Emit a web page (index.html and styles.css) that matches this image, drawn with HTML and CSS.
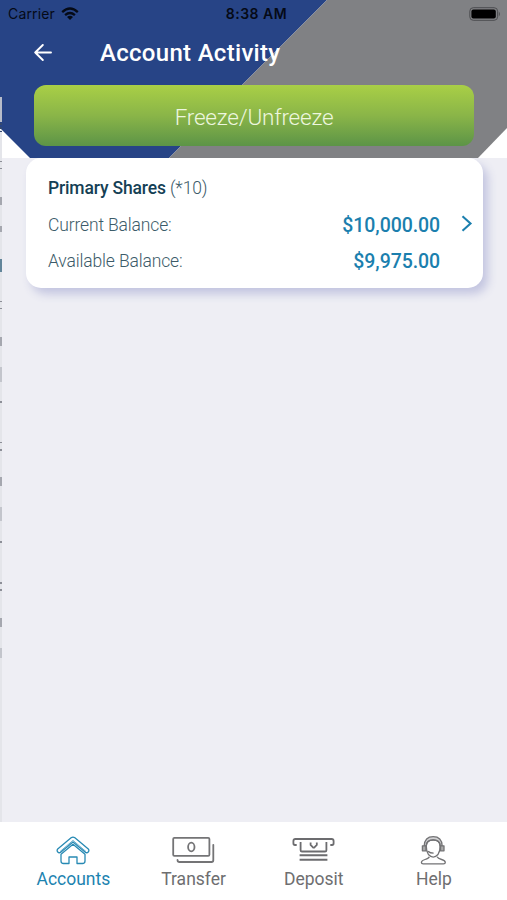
FILE: index.html
```html
<!DOCTYPE html>
<html lang="en">
<head>
<meta charset="utf-8">
<title>Account Activity</title>
<link rel="stylesheet" href="styles.css">
</head>
<body>
<div class="app">
  <header class="header">
    <svg class="header-bg" viewBox="0 0 507 158" aria-hidden="true">
      <path fill="#fff" d="M0 0h507v158H0z"/>
      <path fill="#274486" d="M0 0H327L169 158H30L0 128z"/>
      <path fill="#808184" d="M327 0H507V128L478 158H169z"/>
    </svg>
    <div class="status">
      <div class="carrier"><span class="carrier-name">Carrier</span>
        <svg width="18" height="14" viewBox="0 0 18 14" fill="none" stroke="#050a16" stroke-width="2.3"><path d="M1.2 5.1Q9 -2 16.8 5.1M4.1 8.1Q9 3.8 13.9 8.1"/><path fill="#050a16" stroke="none" d="M6 10Q9 7.6 12 10L9 13z"/></svg>
      </div>
      <span class="time">8:38 AM</span>
      <svg class="battery" width="32" height="14" viewBox="0 0 32 14"><rect x=".8" y=".7" width="27.8" height="12.6" rx="3.5" fill="none" stroke="#4c4d50"/><rect x="2.4" y="2.4" width="24.4" height="9.2" rx="2" fill="#000"/><path d="M29.8 4.5q2.2 2.5 0 5z" fill="#4c4d50"/></svg>
    </div>
    <div class="nav">
      <svg class="back" width="18" height="17" viewBox="0 0 18 17" fill="none" stroke="#fff" stroke-width="1.9" stroke-linecap="round" stroke-linejoin="round"><path d="M17 8.5H1.2M8.8 1L1.2 8.5l7.6 7.5"/></svg>
      <h1 class="title">Account Activity</h1>
    </div>
    <button class="freeze"><span>Freeze/Unfreeze</span></button>
  </header>
  <main class="content">
    <section class="card">
      <div class="card-title"><b>Primary Shares</b> (*10)</div>
      <div class="row"><span class="label">Current Balance:</span><span class="amount first">$10,000.00</span>
        <svg class="chevron" width="12" height="17" viewBox="0 0 12 17" fill="none" stroke="#1b7fae" stroke-width="2.1"><path d="M1.5 1.3l8 7.2-8 7.2"/></svg>
      </div>
      <div class="row"><span class="label">Available Balance:</span><span class="amount">$9,975.00</span></div>
    </section>
  </main>
  <nav class="tabs">
    <a class="tab active">
      <svg width="34" height="29" viewBox="0 0 34 29" fill="none" stroke="#288ab4" stroke-width="1.3" stroke-linejoin="round"><path d="M15.1 1.8Q17 .3 18.9 1.8L32.3 13Q33.5 14.5 32.2 16T29.3 16.2L17 6 4.7 16.2Q3.1 17.5 1.8 16T1.7 13z"/><path d="M5 18.3L17 8.3 29 18.3V25Q29 27.5 26.5 27.5H21V21H13V27.5H7.5Q5 27.5 5 25z"/><path d="M4 15.6L17 4.4 30 15.6" stroke-width=".7"/></svg>
      <span>Accounts</span>
    </a>
    <a class="tab">
      <svg width="43" height="29" viewBox="0 0 43 29" fill="none" stroke="#747476" stroke-width="1.8" stroke-linecap="round"><rect x="1.2" y="1.9" width="36.2" height="18" rx="1.2"/><ellipse cx="19.3" cy="11" rx="3.2" ry="4.3"/><path d="M41.3 8.8V24.3Q41.3 26 39.5 26H7.5Q5.5 26 5.5 24"/></svg>
      <span>Transfer</span>
    </a>
    <a class="tab">
      <svg width="43" height="29" viewBox="0 0 43 29" fill="none" stroke="#6c6c6f" stroke-width="1.8"><path d="M4.7 9H3Q1.4 9 1.4 7.3V5Q1.4 3 3.4 3H39.6Q41.6 3 41.6 5V7.3Q41.6 9 40 9H38.3"/><path d="M8.6 6V14.2Q8.6 15.5 10 15.5H33Q34.4 15.5 34.4 14.2V6M18.6 6.5V9L21.2 11.6h1L24.8 9V6.5"/><path stroke-width="2" d="M7.6 19.2H35.4M7.6 23.7H35.4"/></svg>
      <span>Deposit</span>
    </a>
    <a class="tab">
      <svg width="27" height="29" viewBox="0 0 27 29" fill="none" stroke="#737375" stroke-width="1.3" stroke-linejoin="round"><path fill="#d2d2d4" d="M4.2 10Q4.6 .7 13.2 .7T22.2 10H20.2Q20 4 13.2 4T6.2 10z"/><path d="M6.3 10Q6.1 15 8.4 18.5 13.2 23.6 18 18.5 20.3 15 20.1 10 20 3.8 13.2 3.8T6.3 10z"/><rect x="2.4" y="9.8" width="3.5" height="5" fill="#aaa"/><rect x="20.5" y="9.8" width="3.5" height="5" fill="#aaa"/><path d="M8 15.2q2 2 5.6 2M9.3 20.8Q8.8 22.4 5 23.5 1.4 24.5 1.4 26.5 1.4 27.8 3.2 27.8H23.5Q25.3 27.8 25.3 26.5 25.3 24.5 21.6 23.5 17.8 22.4 17.1 20.8"/></svg>
      <span>Help</span>
    </a>
  </nav>
  <svg class="edge" viewBox="0 0 2 900" aria-hidden="true">
    <path fill="#e4e5ea" d="M0 130h2v692H0z"/>
    <path fill="#b7bcc9" d="M0 97h2v25H0z"/>
    <path fill="#34496f" d="M0 123h2v2H0zM0 127h2v2H0zM0 131h2v1H0z"/>
    <path fill="#8d8f98" d="M0 161h2v1H0zM0 168h2v1H0zM0 301h2v1H0zM0 308h2v1H0zM0 401h2v2H0zM0 442h2v1H0zM0 449h2v2H0zM0 541h2v2H0zM0 582h2v2H0zM0 589h2v2H0z"/>
    <path fill="#a5a7af" d="M0 197h2v8H0zM0 226h2v6H0zM0 337h2v9H0zM0 477h2v9H0zM0 618h2v9H0z"/>
    <path fill="#62859a" d="M0 259h2v13H0z"/>
    <path fill="#c3c5cc" d="M0 367h2v15H0zM0 507h2v14H0zM0 648h2v10H0z"/>
  </svg>
</div>
</body>
</html>
```
FILE: styles.css
```css
* { box-sizing: border-box; }
body { margin: 0; font-family: Roboto, "Liberation Sans", sans-serif; }
.app { position: relative; width: 507px; height: 900px; display: flex; flex-direction: column; background: #eeeef4; overflow: hidden; }
.header { position: relative; z-index: 0; height: 158px; flex: none; display: flex; flex-direction: column; }
.header-bg { position: absolute; inset: 0; width: 507px; height: 158px; z-index: -1; }
.status { height: 27px; padding: 0 6px 0 8px; display: grid; grid-template-columns: 1fr auto 1fr; align-items: center; color: #050a16; font-family: Inter, sans-serif; font-size: 14px; }
.carrier { display: flex; align-items: center; gap: 6px; }
.carrier-name { letter-spacing: .15px; }
.time { font-weight: 600; letter-spacing: .5px; padding-left: 4px; }
.battery { justify-self: end; }
.nav { height: 58px; display: flex; align-items: center; padding: 0 34px 9px; }
.back { margin-top: 1px; }
.title { margin: 3px 0 0 48px; color: #fff; font-size: 24px; line-height: 30px; font-weight: 500; letter-spacing: .3px; }
.freeze { margin: 0 33px 0 34px; height: 61px; border: 0; border-radius: 12px; background: linear-gradient(#a9cf46, #8ab548 50%, #5c9447); color: #edf6df; font: 300 22.5px/61px Roboto, sans-serif; letter-spacing: -.22px; padding: 2px 0 0; }
.content { flex: 1; padding: 0 24px 0 26px; }
.card { height: 130px; padding: 11px 10px 0 22px; background: #fff; border-radius: 15px; box-shadow: 5px 6px 10px #c3c5e0; color: #3c5b69; font-weight: 300; letter-spacing: -.15px; }
.card-title { height: 37px; padding-top: 1px; font-size: 17.5px; line-height: 36px; }
.card-title b { font-weight: 500; color: #153f55; }
.row { height: 36px; display: flex; align-items: center; font-size: 17.5px; }
.label { flex: 1; padding-top: 2px; }
.amount { flex: none; margin-right: 33px; padding-top: 2px; font-size: 19.5px; font-weight: 500; letter-spacing: -.08px; color: #1b7fae; }
.amount.first { margin-right: 21px; }
.chevron { margin-top: -1px; }
.tabs { height: 78px; flex: none; display: flex; padding: 0 13.3px; background: #fff; }
.tab { width: 120.2px; flex: none; display: flex; flex-direction: column; align-items: center; padding-top: 14px; color: #6e6e70; font-size: 17.5px; line-height: 28px; }
.tab svg { flex: none; }
.tab.active { color: #1c83b0; }
.edge { position: absolute; left: 0; top: 0; width: 2px; height: 900px; }
```
